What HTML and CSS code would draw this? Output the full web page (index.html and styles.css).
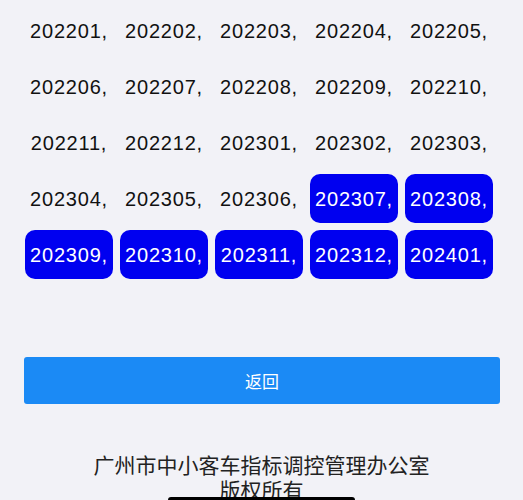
FILE: index.html
```html
<!DOCTYPE html>
<html lang="zh-CN">
<head>
  <meta charset="UTF-8">
  <meta name="viewport" content="width=device-width, initial-scale=1.0">
  <title>指标有效期</title>
  <link rel="stylesheet" href="styles.css">
</head>
<body>
  <div class="page">
    <div class="period-grid">
      <div class="period">202201,</div>
      <div class="period">202202,</div>
      <div class="period">202203,</div>
      <div class="period">202204,</div>
      <div class="period">202205,</div>
      <div class="period">202206,</div>
      <div class="period">202207,</div>
      <div class="period">202208,</div>
      <div class="period">202209,</div>
      <div class="period">202210,</div>
      <div class="period">202211,</div>
      <div class="period">202212,</div>
      <div class="period">202301,</div>
      <div class="period">202302,</div>
      <div class="period">202303,</div>
      <div class="period">202304,</div>
      <div class="period">202305,</div>
      <div class="period">202306,</div>
      <div class="period active">202307,</div>
      <div class="period active">202308,</div>
      <div class="period active">202309,</div>
      <div class="period active">202310,</div>
      <div class="period active">202311,</div>
      <div class="period active">202312,</div>
      <div class="period active">202401,</div>
    </div>

    <button class="back-button">返回</button>

    <div class="footer">
      <div>广州市中小客车指标调控管理办公室</div>
      <div>版权所有</div>
    </div>
  </div>

  <div class="home-indicator"></div>
</body>
</html>
```

FILE: styles.css
```css
body {
  margin: 0;
  padding: 0;
  background: #f2f2f7;
  font-family: "Liberation Sans", "Noto Sans CJK SC", sans-serif;
  color: #111;
  overflow: hidden;
}

.page {
  height: 500px;
}

.period-grid {
  display: grid;
  grid-template-columns: repeat(5, 88px);
  grid-auto-rows: 49px;
  gap: 7px;
  padding: 6px 0 0 25px;
}

.period {
  display: flex;
  align-items: center;
  justify-content: center;
  font-size: 20px;
  letter-spacing: 0.8px;
  border-radius: 10px;
  padding-top: 2px;
  box-sizing: border-box;
}

.period.active {
  background: #0000f0;
  color: white;
}

.back-button {
  display: block;
  width: 476px;
  height: 47px;
  margin: 78px 0 0 24px;
  border: none;
  border-radius: 3px;
  background: #1b8af5;
  color: white;
  font-family: "Noto Sans CJK SC", sans-serif;
  font-size: 17px;
  cursor: pointer;
}

.footer {
  margin-top: 48px;
  text-align: center;
  font-family: "Noto Sans CJK SC", sans-serif;
  font-size: 21px;
  line-height: 25px;
  color: #222;
}

.home-indicator {
  position: fixed;
  left: 168px;
  bottom: 0;
  width: 187px;
  height: 3px;
  background: #000;
  border-radius: 3px 3px 0 0;
}
```
